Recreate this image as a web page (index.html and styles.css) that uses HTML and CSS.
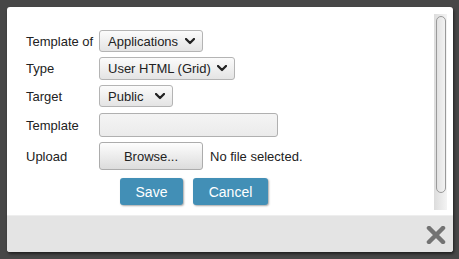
FILE: index.html
```html
<!DOCTYPE html>
<html>
<head>
<meta charset="utf-8">
<link rel="stylesheet" href="styles.css">
</head>
<body>
<div class="dialog">
  <div class="body">
    <div class="form">
      <div class="row">
        <span class="label">Template of</span>
        <div class="select w1"><span>Applications</span><svg class="chev" viewBox="0 0 10 7" width="10" height="7"><polyline points="1,1 5,5 9,1"/></svg></div>
      </div>
      <div class="row r2">
        <span class="label">Type</span>
        <div class="select w2"><span>User HTML (Grid)</span><svg class="chev" viewBox="0 0 10 7" width="10" height="7"><polyline points="1,1 5,5 9,1"/></svg></div>
      </div>
      <div class="row">
        <span class="label">Target</span>
        <div class="select w3"><span>Public</span><svg class="chev" viewBox="0 0 10 7" width="10" height="7"><polyline points="1,1 5,5 9,1"/></svg></div>
      </div>
      <div class="row r4">
        <span class="label">Template</span>
        <div class="input"></div>
      </div>
      <div class="row r5">
        <span class="label">Upload</span>
        <div class="browse">Browse...</div>
        <span class="nofile">No file selected.</span>
      </div>
      <div class="actions">
        <div class="btn save">Save</div>
        <div class="btn cancel">Cancel</div>
      </div>
    </div>
    <div class="scroll"><div class="thumb"></div></div>
  </div>
  <div class="footer">
    <svg class="close" viewBox="0 0 20 18" width="20" height="18"><path d="M3 2 L17 16 M17 2 L3 16"/></svg>
  </div>
</div>
</body>
</html>
```
FILE: styles.css
```css
html, body { margin: 0; padding: 0; }
body {
  background: #474747;
  font-family: "Liberation Sans", Arial, sans-serif;
  font-size: 13px;
  color: #222;
  width: 459px;
  height: 259px;
  overflow: hidden;
}
.dialog {
  margin: 7px 0 0 7px;
  width: 446px;
  height: 245px;
  background: #fff;
  border-radius: 3px;
  box-shadow: 1px 2px 3px rgba(0,0,0,0.55);
  display: flex;
  flex-direction: column;
  overflow: hidden;
}
.body {
  height: 208px;
  display: flex;
}
.form {
  flex: 1;
  padding: 23px 0 0 19px;
  display: flex;
  flex-direction: column;
}
.row {
  display: flex;
  align-items: center;
  height: 22px;
  margin-bottom: 5px;
}
.row.r2 { height: 23px; }
.row.r3 { height: 22px; }
.row.r4 { height: 24px; margin-top: 1px; }
.row.r5 { height: 28px; margin-bottom: 8px; }
.label {
  width: 73px;
  flex: none;
}
.select {
  box-sizing: border-box;
  height: 100%;
  border: 1px solid #b4b4b4;
  border-radius: 3px;
  background: linear-gradient(#fbfbfb, #e4e4e4);
  display: flex;
  align-items: center;
  padding: 0 7px 0 8px;
  color: #222;
}
.select span { flex: 1; }
.w1 { width: 104px; }
.w2 { width: 136px; }
.w3 { width: 74px; }
.chev { flex: none; }
.chev polyline {
  fill: none;
  stroke: #222;
  stroke-width: 2.3;
  stroke-linecap: round;
  stroke-linejoin: round;
}
.input {
  box-sizing: border-box;
  width: 179px;
  height: 100%;
  border: 1px solid #b0b0b0;
  border-radius: 3px;
  background: linear-gradient(#f4f4f4, #ebebeb);
}
.browse {
  box-sizing: border-box;
  width: 104px;
  height: 100%;
  border: 1px solid #acacac;
  border-radius: 3px;
  background: linear-gradient(#fdfdfd, #dcdcdc);
  display: flex;
  align-items: center;
  justify-content: center;
  color: #222;
}
.nofile { margin-left: 7px; }
.actions {
  display: flex;
  gap: 10px;
  padding-left: 94px;
}
.btn {
  height: 27px;
  border-radius: 3px;
  background: #428fb6;
  color: #fff;
  font-size: 14px;
  display: flex;
  align-items: center;
  justify-content: center;
  box-shadow: 1px 1px 2px rgba(0,0,0,0.35);
}
.save { width: 63px; }
.cancel { width: 75px; }
.scroll {
  width: 13px;
  margin: 7px 6px 5px 0;
  background: linear-gradient(90deg, #dcdcdc, #f4f4f4);
  padding: 2px 1px 0 2px;
  box-sizing: border-box;
}
.thumb {
  box-sizing: border-box;
  height: 177px;
  border: 1px solid #9a9a9a;
  border-radius: 5px;
  background: linear-gradient(90deg, #e2e2e2, #f2f2f2);
}
.footer {
  flex: 1;
  background: #e4e4e4;
  border-top: 1px solid #eeeeee;
  display: flex;
  align-items: center;
  justify-content: flex-end;
  padding-right: 7px;
}
.close path {
  stroke: #737373;
  stroke-width: 4.5;
  stroke-linecap: round;
}
.close { margin-top: 2px; }
```
